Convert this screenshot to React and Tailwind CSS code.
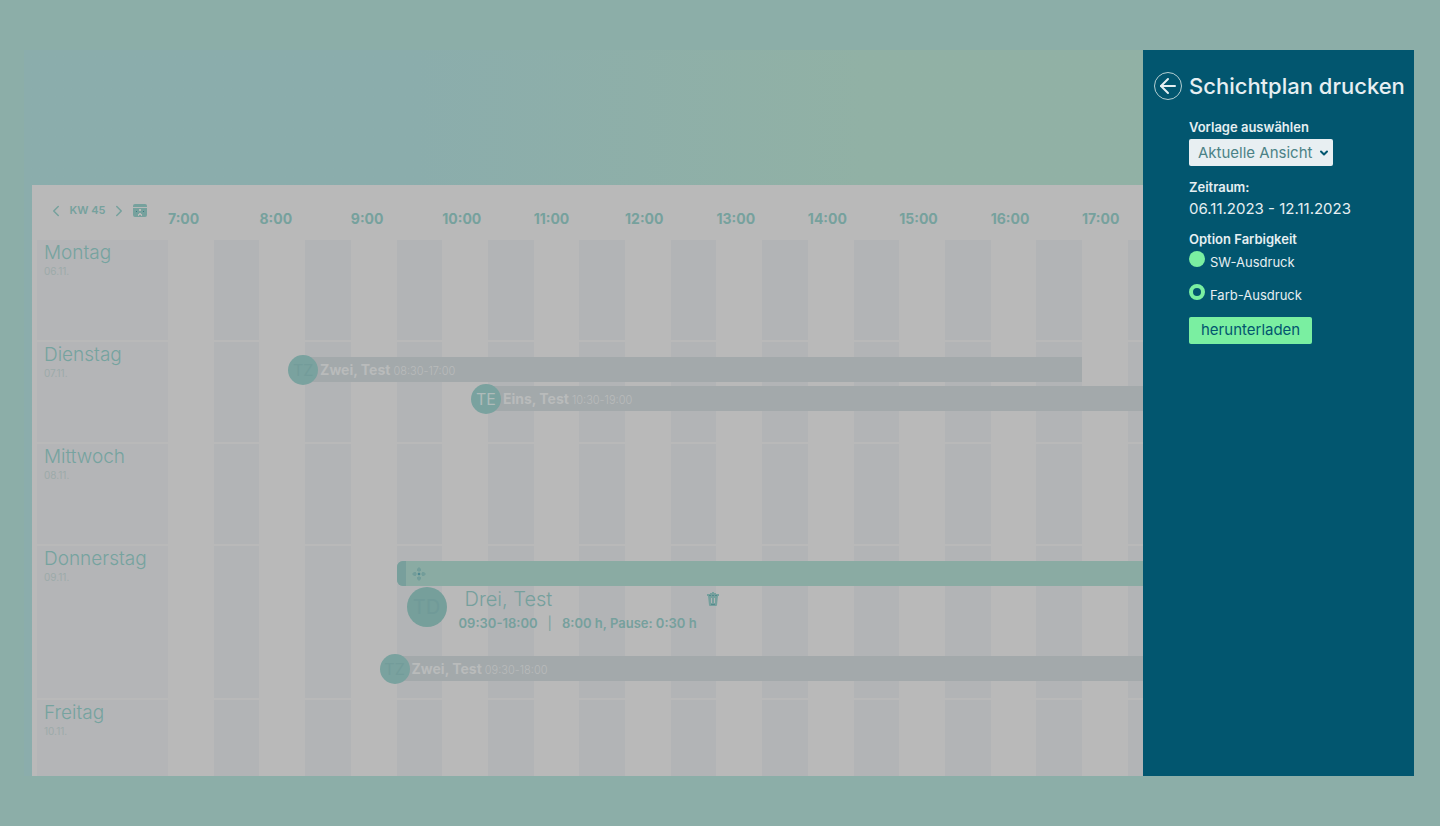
import { ArrowLeft, ChevronDown, ChevronLeft, ChevronRight } from 'lucide-react';

const DAY_START = 7 * 60;
const VISIBLE_MINUTES = 640;
const HOURS = [7, 8, 9, 10, 11, 12, 13, 14, 15, 16, 17];

const DAYS = [
  { name: 'Montag', date: '06.11.', height: 'min-h-[100px]', shifts: [] },
  {
    name: 'Dienstag',
    date: '07.11.',
    height: 'min-h-[100px]',
    shifts: [
      { initials: 'TZ', name: 'Zwei, Test', from: '08:30', to: '17:00' },
      { initials: 'TE', name: 'Eins, Test', from: '10:30', to: '19:00', bright: true },
    ],
  },
  { name: 'Mittwoch', date: '08.11.', height: 'min-h-[100px]', shifts: [] },
  {
    name: 'Donnerstag',
    date: '09.11.',
    height: 'min-h-[152px]',
    shifts: [
      { initials: 'TD', name: 'Drei, Test', from: '09:30', to: '18:00', selected: true },
      { initials: 'TZ', name: 'Zwei, Test', from: '09:30', to: '18:00' },
    ],
  },
  { name: 'Freitag', date: '10.11.', height: 'min-h-[76px]', shifts: [] },
];

function toMinutes(time) {
  const [h, m] = time.split(':').map(Number);
  return h * 60 + m;
}

function shiftStyle({ from, to }) {
  const start = toMinutes(from);
  return {
    marginLeft: `${((start - DAY_START) / VISIBLE_MINUTES) * 100}%`,
    width: `${((toMinutes(to) - start) / VISIBLE_MINUTES) * 100}%`,
  };
}

function CalendarIcon() {
  return (
    <svg viewBox="0 0 14 14" className="size-3.5" aria-hidden="true">
      <path d="M2 0h10a2 2 0 0 1 2 2v1H0V2a2 2 0 0 1 2-2Z" fill="#76a19d" />
      <path
        d="M0 4h14v7a2 2 0 0 1-2 2H2a2 2 0 0 1-2-2Z M6 5v2h2V5Z M6 9v1H5v2h1v-1h2v1h1v-2H8V9Z"
        fill="#76a19d"
        fillRule="evenodd"
      />
      <path d="M3 7h1v1H3Z M10 7h1v1h-1Z" fill="#3f7a84" />
    </svg>
  );
}

function TrashIcon() {
  return (
    <svg viewBox="0 0 12 14" className="h-3.5 w-3" aria-hidden="true">
      <path
        d="M5 0h2v1h2v1h3v2h-1l-1 9a1 1 0 0 1-1 1H3a1 1 0 0 1-1-1L1 4H0V2h3V1h2Z M4 6v5h1V6Z M7 6v5h1V6Z"
        fill="#76a09d"
        fillRule="evenodd"
      />
      <path d="M2 3h2v1H2Z M5 3h2v1H5Z M8 3h2v1H8Z M4 12h4v1H4Z" fill="#558a8e" />
    </svg>
  );
}

function MoveIcon() {
  return (
    <svg viewBox="0 0 14 14" className="ml-1.5 size-3.5" aria-hidden="true">
      <path
        d="M7 0l2 2v2H5V2Z M7 14l2-2v-2H5v2Z M0 7l2-2h2v4H2Z M14 7l-2-2h-2v4h2Z"
        fill="#739d9a"
      />
      <path d="M7 3v8M3 7h8" stroke="#739d9a" />
      <path d="M6 6h2v2H6Z" fill="#4d8791" />
    </svg>
  );
}

function ShiftBar({ shift }) {
  return (
    <div className="flex h-[25px] shrink-0 items-center bg-[#a3a9ab]" style={shiftStyle(shift)}>
      <span
        className={`-ml-[17px] flex size-[30px] shrink-0 items-center justify-center rounded-full bg-[#7aa29f] text-base ${
          shift.bright ? 'text-[#aebbba]' : 'text-[#739c9a]'
        }`}
      >
        {shift.initials}
      </span>
      <p className="ml-0.5 flex items-baseline gap-[3px] whitespace-nowrap pt-0.5 leading-5 text-[#b9bbbb]">
        <span className="text-sm font-bold">{shift.name}</span>
        <span className="text-[11px] font-light">
          {shift.from}-{shift.to}
        </span>
      </p>
    </div>
  );
}

function SelectedShift({ shift }) {
  return (
    <div className="mb-[17px] shrink-0" style={shiftStyle(shift)}>
      <div className="flex h-[25px] items-center rounded-l-md bg-[#8aaba3]">
        <span className="h-full w-[9px] rounded-l-md bg-[#789f9c]" />
        <MoveIcon />
      </div>
      <div className="flex gap-3 pt-px pl-2.5">
        <span className="flex size-10 shrink-0 items-center justify-center rounded-full bg-[#769f9b] text-xl text-[#709a98]">
          {shift.initials}
        </span>
        <div className="text-[#76a09d]">
          <div className="flex w-[260px] items-center justify-between pl-1.5">
            <span className="text-xl leading-6 font-light">{shift.name}</span>
            <button type="button" aria-label="Schicht löschen">
              <TrashIcon />
            </button>
          </div>
          <p className="flex gap-2.5 whitespace-nowrap text-[13px] leading-6 font-semibold">
            <span>
              {shift.from}-{shift.to}
            </span>
            <span className="font-normal">|</span>
            <span>8:00 h, Pause: 0:30 h</span>
          </p>
        </div>
      </div>
    </div>
  );
}

function DayRow({ day }) {
  return (
    <section className={`flex ${day.height}`}>
      <div className="w-[131px] shrink-0 bg-[#b4b5b7] px-[7px]">
        <h2 className="pt-px text-[19px] leading-6 font-light text-[#76a39f]">{day.name}</h2>
        <p className="text-[10px] leading-3 text-[#9caaa9]">{day.date}</p>
      </div>
      <div className="relative min-w-0 flex-1 overflow-hidden">
        {/* half-hour stripes behind the shifts */}
        <div className="absolute inset-0 flex">
          {HOURS.map((hour) => (
            <div key={hour} className="flex w-[9.375%] shrink-0 justify-end">
              <div className="w-1/2 bg-[#b2b4b6]" />
            </div>
          ))}
        </div>
        <div className="relative flex flex-col gap-1 pt-[15px]">
          {day.shifts.map((shift) =>
            shift.selected ? (
              <SelectedShift key={shift.name} shift={shift} />
            ) : (
              <ShiftBar key={shift.name} shift={shift} />
            )
          )}
        </div>
      </div>
    </section>
  );
}

function Schedule() {
  return (
    <main className="ml-2 flex flex-1 flex-col bg-[#b9b9b9] pl-[5px]">
      <header className="flex h-[55px] shrink-0 text-[#76a19d]">
        <div className="flex h-[51px] w-[131px] shrink-0 items-center pl-2.5">
          <button type="button" aria-label="Vorherige Woche">
            <ChevronLeft className="size-[18px]" />
          </button>
          <span className="w-[45px] text-center text-[11px] font-semibold whitespace-nowrap">KW 45</span>
          <button type="button" aria-label="Nächste Woche">
            <ChevronRight className="size-[18px]" />
          </button>
          <button type="button" aria-label="Kalender" className="ml-[5px]">
            <CalendarIcon />
          </button>
        </div>
        <div className="flex min-w-0 flex-1 overflow-hidden pt-6">
          {HOURS.map((hour) => (
            <span key={hour} className="w-[9.375%] shrink-0 text-sm leading-5 font-bold">
              {hour}:00
            </span>
          ))}
        </div>
      </header>
      <div className="flex flex-col gap-0.5">
        {DAYS.map((day) => (
          <DayRow key={day.name} day={day} />
        ))}
      </div>
    </main>
  );
}

function ColorOption({ id, label, defaultChecked }) {
  return (
    <div className="flex gap-[5px]">
      <input
        id={id}
        type="radio"
        name="color"
        defaultChecked={defaultChecked}
        className="size-4 appearance-none rounded-full bg-[#7aefa1] checked:border-4 checked:border-[#7aefa1] checked:bg-[#02566f]"
      />
      <label htmlFor={id} className="pt-0.5 text-[13px] leading-[18px]">
        {label}
      </label>
    </div>
  );
}

function PrintPanel() {
  return (
    <aside className="w-[271px] shrink-0 bg-[#02566f] pt-5 text-[#e6eff2]">
      <div className="flex items-center gap-[7px] pl-[11px]">
        <button
          type="button"
          aria-label="Zurück"
          className="flex size-7 shrink-0 items-center justify-center rounded-full border border-[#b5cfd2]"
        >
          <ArrowLeft className="size-6" strokeWidth={2} />
        </button>
        <h1 className="text-[22px] leading-8 font-medium whitespace-nowrap">Schichtplan drucken</h1>
      </div>
      <form className="pl-[46px]" onSubmit={(e) => e.preventDefault()}>
        <label htmlFor="template" className="mt-[15px] block text-[13px] leading-5 font-semibold">
          Vorlage auswählen
        </label>
        <div className="relative mt-0.5 w-36">
          <select
            id="template"
            className="block h-[27px] w-full appearance-none rounded-xs bg-[#e8eff2] pt-0.5 pl-[9px] text-[15px] text-[#4b8286]"
          >
            <option>Aktuelle Ansicht</option>
          </select>
          <ChevronDown
            className="pointer-events-none absolute top-2 right-[3px] size-3 text-[#02566f]"
            strokeWidth={4}
          />
        </div>
        <p className="mt-[11px] text-[13px] leading-5 font-semibold">Zeitraum:</p>
        <p className="text-[15px] leading-6">06.11.2023 - 12.11.2023</p>
        <fieldset className="mt-2">
          <legend className="text-[13px] leading-5 font-semibold">Option Farbigkeit</legend>
          <div className="flex flex-col gap-[13px] pt-0.5">
            <ColorOption id="color-bw" label="SW-Ausdruck" />
            <ColorOption id="color-full" label="Farb-Ausdruck" defaultChecked />
          </div>
        </fieldset>
        <button
          type="submit"
          className="mt-[13px] h-[27px] rounded-xs bg-[#7aefa1] px-3 text-[15px] text-[#02566f]"
        >
          herunterladen
        </button>
      </form>
    </aside>
  );
}

export default function App() {
  return (
    <div className="flex min-h-screen bg-[#8caea8] py-[50px] pr-[26px] pl-6 font-['Inter','Roboto',sans-serif]">
      <div className="flex min-w-0 flex-1 flex-col bg-linear-to-r from-[#8badac] from-35% to-[#91b1a5] to-75%">
        <div className="h-[135px]" />
        <Schedule />
      </div>
      <PrintPanel />
    </div>
  );
}
